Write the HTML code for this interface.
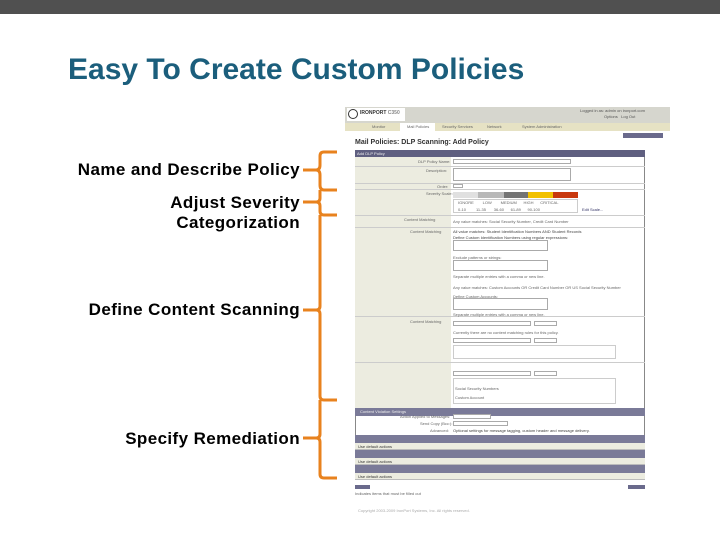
<!DOCTYPE html>
<html><head><style>
*{margin:0;padding:0;box-sizing:border-box}
body{width:720px;height:540px;background:#fff;position:relative;overflow:hidden;font-family:"Liberation Sans",sans-serif}
.a{position:absolute}
.lab{position:absolute;right:420px;font-weight:bold;font-size:17px;letter-spacing:0.4px;color:#000;text-align:right;line-height:20px;white-space:nowrap}
.t{position:absolute;font-size:4px;color:#666;white-space:nowrap;line-height:5px}
.sh{position:absolute;left:355px;width:290px;height:8px;background:#7a7a98}
.cb{position:absolute;left:355px;width:290px;height:7px;background:#ecece0;border-bottom:1px solid #bbb}
.in{position:absolute;background:#fff;border:1px solid #aaa}
</style></head><body>
<div class="a" style="left:0;top:0;width:720px;height:14px;background:#505050"></div>
<div class="a" style="left:68px;top:53px;font-size:30px;font-weight:bold;color:#1b5e7c;letter-spacing:0;white-space:nowrap">Easy To Create Custom Policies</div>

<div class="lab" style="top:160px">Name and Describe Policy</div>
<div class="lab" style="top:193px">Adjust Severity<br>Categorization</div>
<div class="lab" style="top:300px">Define Content Scanning</div>
<div class="lab" style="top:429px">Specify Remediation</div>

<svg class="a" style="left:300px;top:145px" width="45" height="340" viewBox="300 145 45 340">
<g fill="none" stroke="#e8821e" stroke-width="3">
<path d="M337 152 H324 Q320 152 320 156 V165 Q320 170 316 170 H303 M316 170 Q320 170 320 175 V185 Q320 190 324 190 H337"/>
<path d="M320 190 V198 Q320 202 316 202 H303 M316 202 Q320 202 320 206 V211 Q320 215 324 215 H337"/>
<path d="M320 215 V306 Q320 310 316 310 H303 M316 310 Q320 310 320 314 V396 Q320 400 324 400 H337"/>
<path d="M320 400 V434 Q320 438 316 438 H303 M316 438 Q320 438 320 442 V474 Q320 478 324 478 H337"/>
</g></svg>

<!-- screenshot -->
<div class="a" style="left:345px;top:107px;width:325px;height:16px;background:#d6d6ce"></div>
<div class="a" style="left:347px;top:108px;width:58px;height:13px;background:#fff"></div>
<div class="a" style="left:348px;top:109px;width:10px;height:10px;border:1px solid #333;border-radius:50%"></div>
<div class="t" style="left:360px;top:111px;font-size:5px;color:#333;font-weight:bold">IRONPORT <span style="color:#888">C350</span></div>
<div class="t" style="left:580px;top:108px;color:#555">Logged in as: admin on ironport.com</div>
<div class="t" style="left:604px;top:114px;color:#555">Options &nbsp; Log Out</div>
<div class="a" style="left:345px;top:123px;width:325px;height:8px;background:#e6e2c4"></div>
<div class="a" style="left:400px;top:123px;width:35px;height:8px;background:#fff"></div>
<div class="t" style="left:372px;top:124px">Monitor</div>
<div class="t" style="left:407px;top:124px">Mail Policies</div>
<div class="t" style="left:442px;top:124px">Security Services</div>
<div class="t" style="left:487px;top:124px">Network</div>
<div class="t" style="left:522px;top:124px">System Administration</div>
<div class="a" style="left:623px;top:133px;width:40px;height:5px;background:#6a6a8c"></div>
<div class="a" style="left:355px;top:139px;font-size:7px;font-weight:bold;color:#333;white-space:nowrap">Mail Policies: DLP Scanning: Add Policy</div>

<div class="a" style="left:355px;top:150px;width:290px;height:330px;background:#fff;border:1px solid #888"></div>
<div class="a" style="left:355px;top:150px;width:96px;height:258px;background:#ecece0"></div>
<div class="a" style="left:355px;top:150px;width:290px;height:7px;background:#5f5f80"></div>
<div class="t" style="left:357px;top:151px;color:#eee">Add DLP Policy</div>
<div class="a" style="left:355px;top:166px;width:290px;border-top:1px solid #ccc"></div>
<div class="a" style="left:355px;top:183px;width:290px;border-top:1px solid #ccc"></div>
<div class="a" style="left:355px;top:189px;width:290px;border-top:1px solid #ccc"></div>
<div class="a" style="left:355px;top:215px;width:290px;border-top:1px solid #ccc"></div>
<div class="a" style="left:355px;top:227px;width:290px;border-top:1px solid #ccc"></div>
<div class="a" style="left:355px;top:316px;width:290px;border-top:1px solid #ccc"></div>
<div class="a" style="left:355px;top:362px;width:290px;border-top:1px solid #ccc"></div>
<div class="t" style="left:418px;top:159px">DLP Policy Name:</div>
<div class="in" style="left:453px;top:159px;width:118px;height:5px"></div>
<div class="t" style="left:426px;top:168px">Description:</div>
<div class="in" style="left:453px;top:168px;width:118px;height:13px"></div>
<div class="t" style="left:437px;top:184px">Order:</div>
<div class="in" style="left:453px;top:184px;width:10px;height:4px"></div>
<div class="t" style="left:426px;top:191px">Severity Scale:</div>
<div class="a" style="left:453px;top:192px;width:25px;height:6px;background:#e0e0e0"></div>
<div class="a" style="left:478px;top:192px;width:26px;height:6px;background:#b8b8b8"></div>
<div class="a" style="left:504px;top:192px;width:24px;height:6px;background:#747474"></div>
<div class="a" style="left:528px;top:192px;width:25px;height:6px;background:#f2c100"></div>
<div class="a" style="left:553px;top:192px;width:25px;height:6px;background:#c8380e"></div>
<div class="a" style="left:453px;top:199px;width:125px;height:14px;border:1px solid #ccc"></div>
<div class="t" style="left:458px;top:200px">IGNORE &nbsp;&nbsp;&nbsp;&nbsp;&nbsp;&nbsp; LOW &nbsp;&nbsp;&nbsp;&nbsp;&nbsp;&nbsp; MEDIUM &nbsp;&nbsp;&nbsp;&nbsp; HIGH &nbsp;&nbsp;&nbsp;&nbsp; CRITICAL</div>
<div class="t" style="left:458px;top:207px">0-10 &nbsp;&nbsp;&nbsp;&nbsp;&nbsp;&nbsp;&nbsp; 11-35 &nbsp;&nbsp;&nbsp;&nbsp;&nbsp; 36-60 &nbsp;&nbsp;&nbsp;&nbsp; 61-89 &nbsp;&nbsp;&nbsp;&nbsp; 90-100</div>
<div class="t" style="left:582px;top:207px;color:#336">Edit Scale...</div>
<div class="t" style="left:404px;top:217px">Content Matching</div>
<div class="t" style="left:453px;top:219px">Any value matches: Social Security Number, Credit Card Number</div>
<div class="t" style="left:410px;top:229px">Content Matching</div>
<div class="t" style="left:453px;top:229px;color:#444">All value matches: Student Identification Numbers AND Student Records</div>
<div class="t" style="left:453px;top:235px;color:#444">Define Custom Identification Numbers using regular expressions:</div>
<div class="in" style="left:453px;top:240px;width:95px;height:11px"></div>
<div class="t" style="left:453px;top:255px">Exclude patterns or strings:</div>
<div class="in" style="left:453px;top:260px;width:95px;height:11px"></div>
<div class="t" style="left:453px;top:274px">Separate multiple entries with a comma or new line.</div>
<div class="t" style="left:453px;top:285px">Any value matches: Custom Accounts OR Credit Card Number OR US Social Security Number</div>
<div class="t" style="left:453px;top:294px">Define Custom Accounts:</div>
<div class="in" style="left:453px;top:298px;width:95px;height:12px"></div>
<div class="t" style="left:453px;top:312px">Separate multiple entries with a comma or new line.</div>
<div class="t" style="left:410px;top:319px">Content Matching</div>
<div class="in" style="left:453px;top:321px;width:78px;height:5px"></div>
<div class="in" style="left:534px;top:321px;width:23px;height:5px"></div>
<div class="t" style="left:453px;top:330px">Currently there are no content matching rules for this policy.</div>
<div class="in" style="left:453px;top:338px;width:78px;height:5px"></div>
<div class="in" style="left:534px;top:338px;width:23px;height:5px"></div>
<div class="a" style="left:453px;top:345px;width:163px;height:14px;border:1px solid #ccc"></div>
<div class="in" style="left:453px;top:371px;width:78px;height:5px"></div>
<div class="in" style="left:534px;top:371px;width:23px;height:5px"></div>
<div class="a" style="left:453px;top:378px;width:163px;height:26px;border:1px solid #ccc"></div>
<div class="t" style="left:455px;top:386px">Social Security Numbers</div>
<div class="t" style="left:455px;top:395px">Custom Account</div>
<div class="sh" style="top:408px"></div>
<div class="t" style="left:360px;top:409px;color:#eee">Content Violation Settings</div>
<div class="t" style="left:400px;top:414px">Action Applied to Messages:</div>
<div class="in" style="left:453px;top:414px;width:38px;height:5px"></div>
<div class="t" style="left:420px;top:421px">Send Copy (Bcc:):</div>
<div class="in" style="left:453px;top:421px;width:55px;height:5px"></div>
<div class="t" style="left:430px;top:428px">Advanced:</div>
<div class="t" style="left:453px;top:428px;color:#444">Optional settings for message tagging, custom header and message delivery.</div>
<div class="sh" style="top:435px"></div>
<div class="cb" style="top:443px"></div>
<div class="t" style="left:358px;top:444px;color:#333">Use default actions</div>
<div class="sh" style="top:450px"></div>
<div class="cb" style="top:458px"></div>
<div class="t" style="left:358px;top:459px;color:#333">Use default actions</div>
<div class="sh" style="top:465px"></div>
<div class="cb" style="top:473px"></div>
<div class="t" style="left:358px;top:474px;color:#333">Use default actions</div>
<div class="a" style="left:355px;top:485px;width:15px;height:4px;background:#6a6a8c"></div>
<div class="a" style="left:628px;top:485px;width:17px;height:4px;background:#6a6a8c"></div>
<div class="t" style="left:355px;top:491px">Indicates items that must be filled out</div>
<div class="t" style="left:358px;top:508px;color:#aaa">Copyright 2003-2009 IronPort Systems, Inc. All rights reserved.</div>
</body></html>
